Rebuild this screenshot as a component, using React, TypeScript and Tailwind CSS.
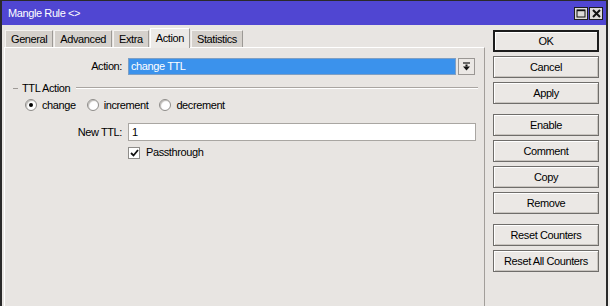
const tabs = ["General", "Advanced", "Extra", "Action", "Statistics"];

function TabButton({ label, active }: { label: string; active: boolean }) {
  return active ? (
    <div className="h-[20px] px-[5px] flex items-center bg-[#eceae7] border-t border-l border-white border-r border-r-[#9c9995] -mb-px z-10 relative">
      {label}
    </div>
  ) : (
    <div className="h-[17px] px-[5px] flex items-center bg-[#d5d1cc] border-t border-l border-[#f4f2f0] border-r border-r-[#9c9995]">
      {label}
    </div>
  );
}

function SideButton({ label, primary }: { label: string; primary?: boolean }) {
  return (
    <button
      type="button"
      className={`h-[22px] w-[106px] flex items-center justify-center bg-[#ebe8e5] text-black ${
        primary
          ? "border-2 border-[#1c1c1c] shadow-[inset_1px_1px_0_#fff]"
          : "border border-[#6f6d6a] shadow-[inset_1px_1px_0_#fff,inset_-1px_-1px_0_#c9c5c0]"
      }`}
    >
      {label}
    </button>
  );
}

function Radio({ label, checked }: { label: string; checked?: boolean }) {
  return (
    <div className="flex items-center gap-[5px]">
      <div className="w-[12px] h-[12px] rounded-full border border-[#8e8c89] bg-white shadow-[inset_1px_1px_1px_#bdbab6] flex items-center justify-center">
        {checked && <div className="w-[4px] h-[4px] rounded-full bg-black" />}
      </div>
      <span>{label}</span>
    </div>
  );
}

export default function App() {
  return (
    <div className="w-[610px] h-[306px] bg-[#f2f0ee] overflow-hidden font-['Liberation_Sans',Arial,sans-serif] text-[11px] tracking-[-0.4px] text-black">
      <div className="w-[608px] h-[306px] flex flex-col border-l-2 border-r-2 border-t border-[#2a2a2a] bg-[#e8e5e2]">
        {/* Title bar */}
        <div className="h-[24px] bg-[#5046d2] flex items-center pl-[6px] pr-[3px] text-white shrink-0">
          <span className="flex-1 pt-px">Mangle Rule &lt;&gt;</span>
          <div className="flex gap-[1px]">
            <div className="w-[14px] h-[13px] border border-[#1e1e1e] bg-[#dcdad8] flex items-center justify-center">
              <svg width="10" height="9" viewBox="0 0 10 9">
                <rect x="1" y="1" width="8" height="7" fill="none" stroke="#111" strokeWidth="1" />
                <line x1="1" y1="1.5" x2="9" y2="1.5" stroke="#111" strokeWidth="1.4" />
              </svg>
            </div>
            <div className="w-[14px] h-[13px] border border-[#1e1e1e] bg-[#dcdad8] flex items-center justify-center">
              <svg width="9" height="9" viewBox="0 0 9 9">
                <path d="M1 1 L8 8 M8 1 L1 8" stroke="#111" strokeWidth="2" />
              </svg>
            </div>
          </div>
        </div>

        <div className="flex flex-1 min-h-0">
          {/* Left: tabs and page */}
          <div className="w-[483px] flex flex-col pl-[2px]">
            <div className="h-[22px] flex items-end pl-[1px] gap-[1px]">
              {tabs.map((t) => (
                <TabButton key={t} label={t} active={t === "Action"} />
              ))}
            </div>
            <div className="flex-1 border-t border-l border-white border-r border-r-[#a29e9a] bg-[#e8e5e2] pt-[10px]">
              {/* Action row */}
              <div className="flex items-center h-[17px]">
                <div className="w-[117px] text-right">Action:</div>
                <div className="ml-[6px] w-[328px] h-[17px] bg-[#3b92ec] border border-[#7e9fc4] text-white flex items-center pl-[2px]">
                  change TTL
                </div>
                <div className="ml-[2px] w-[17px] h-[17px] border border-[#9a9794] bg-[#ebe8e5] flex items-center justify-center">
                  <svg width="9" height="9" viewBox="0 0 9 9">
                    <line x1="1" y1="1" x2="8" y2="1" stroke="#111" strokeWidth="1.2" />
                    <rect x="3.5" y="2.5" width="2" height="2" fill="#111" />
                    <path d="M1 4.5 L8 4.5 L4.5 8.5 Z" fill="#111" />
                  </svg>
                </div>
              </div>

              {/* TTL Action group */}
              <div className="flex items-center mt-[7px] pl-[8px] pr-[6px] h-[12px]">
                <div className="w-[5px] h-px bg-[#9e9a96]" />
                <span className="ml-[4px]">TTL Action</span>
                <div className="ml-[6px] flex-1 h-[2px] border-t border-[#a9a5a1] border-b border-b-white" />
              </div>

              <div className="flex items-center mt-[5px] pl-[20px] gap-[11px] h-[12px]">
                <Radio label="change" checked />
                <Radio label="increment" />
                <Radio label="decrement" />
              </div>

              {/* New TTL */}
              <div className="flex items-center mt-[12px] h-[18px]">
                <div className="w-[117px] text-right">New TTL:</div>
                <div className="ml-[6px] w-[348px] h-[18px] bg-white border border-[#a9a6a2] flex items-center pl-[3px]">
                  1
                </div>
              </div>

              {/* Passthrough */}
              <div className="flex items-center mt-[5px] ml-[123px] gap-[6px] h-[13px]">
                <div className="w-[12px] h-[12px] bg-white border border-[#8e8c89] flex items-center justify-center">
                  <svg width="9" height="8" viewBox="0 0 9 8">
                    <path d="M1 4 L3.5 6.5 L8 1" fill="none" stroke="#111" strokeWidth="1.8" />
                  </svg>
                </div>
                <span>Passthrough</span>
              </div>
            </div>
          </div>

          {/* Right: buttons */}
          <div className="flex-1 flex flex-col pl-[8px] pt-[5px]">
            <div className="flex flex-col gap-[4px]">
              <SideButton label="OK" primary />
              <SideButton label="Cancel" />
              <SideButton label="Apply" />
            </div>
            <div className="flex flex-col gap-[4px] mt-[10px]">
              <SideButton label="Enable" />
              <SideButton label="Comment" />
              <SideButton label="Copy" />
              <SideButton label="Remove" />
            </div>
            <div className="flex flex-col gap-[4px] mt-[10px]">
              <SideButton label="Reset Counters" />
              <SideButton label="Reset All Counters" />
            </div>
          </div>
        </div>
      </div>
    </div>
  );
}
